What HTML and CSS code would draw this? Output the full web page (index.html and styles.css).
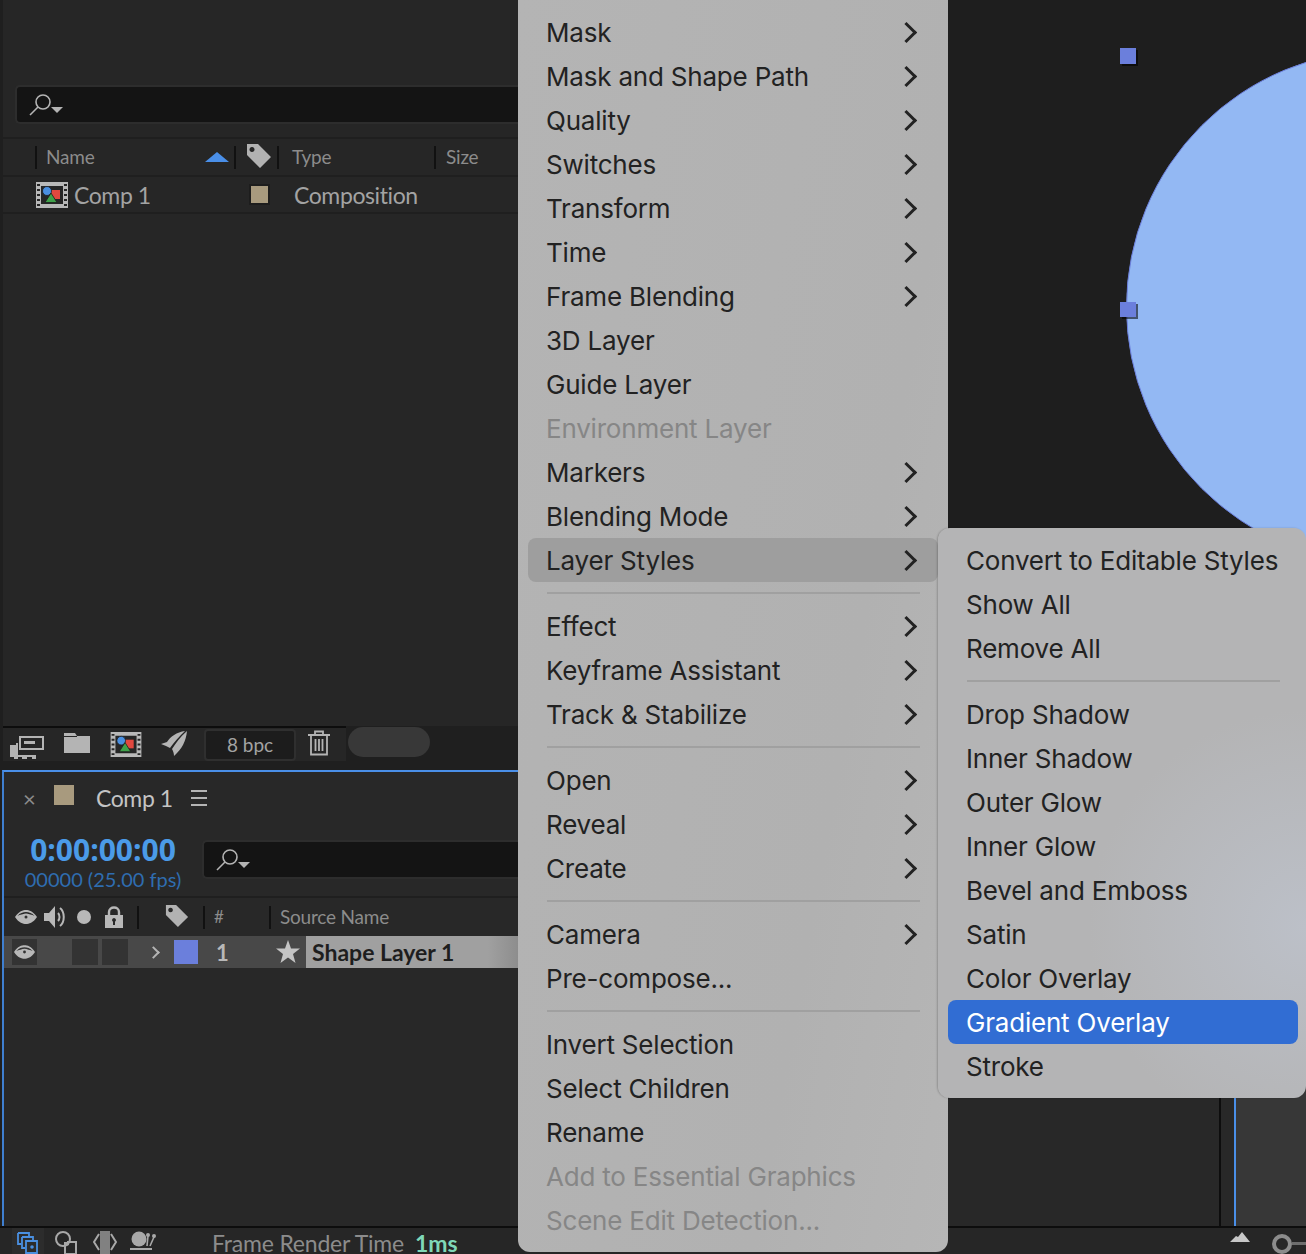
FILE: index.html
```html
<!DOCTYPE html>
<html lang="en">
<head>
  <meta charset="UTF-8" />
  <title>Comp 1 - Layer Styles</title>
  <link rel="stylesheet" href="styles.css">
</head>
<body>
  <svg class="defs" width="0" height="0">
    <symbol id="i-search" viewBox="0 0 34 24">
      <circle cx="14" cy="9" r="7" fill="none" stroke="#b4b4b4" stroke-width="1.6"/>
      <path d="M9 14 L1 22" stroke="#b4b4b4" stroke-width="1.6"/>
      <path d="M22 14 H34 L28 20 Z" fill="#b4b4b4"/>
    </symbol>
    <symbol id="i-tag" viewBox="0 0 26 26">
      <path fill-rule="evenodd" fill="#b2b2b2" d="M1 1 H12 L25 14 L14 25 L1 12 Z M6 4 a2.500 2.500 0 1 0 .01 0 Z"/>
    </symbol>
    <symbol id="i-eye" viewBox="0 0 22 14">
      <path fill-rule="evenodd" fill="#b8b8b8" d="M0 7 C4 1 8 0 11 0 C14 0 18 1 22 7 C18 13 14 14 11 14 C8 14 4 13 0 7 Z M11 2 C8 2 5 3 2.500 6 C5 4.500 8 4 11 4 C14 4 17 4.500 19.500 6 C17 3 14 2 11 2 Z"/>
      <circle cx="11" cy="7.500" r="4" fill="#b8b8b8"/>
      <circle cx="11" cy="7" r="1.500" fill="#333"/>
    </symbol>
    <symbol id="i-comp" viewBox="0 0 32 26">
      <path fill-rule="evenodd" fill="#b9b9b9" d="M0 0 H32 V26 H0 Z M5 4 V22 H27 V4 Z"/>
      <path fill="#262626" d="M1 2 h3 v2 h-3 z M1 7 h3 v2 h-3 z M1 12 h3 v2 h-3 z M1 17 h3 v2 h-3 z M1 22 h3 v2 h-3 z M28 2 h3 v2 h-3 z M28 7 h3 v2 h-3 z M28 12 h3 v2 h-3 z M28 17 h3 v2 h-3 z M28 22 h3 v2 h-3 z"/>
      <rect x="15" y="8" width="9" height="9" fill="#e2483f"/>
      <circle cx="11" cy="9" r="4.500" fill="#4a8fe0" stroke="#1d1d1d" stroke-width=".8"/>
      <path d="M15 11 L21 20.500 H9 Z" fill="#3fa14a" stroke="#1d1d1d" stroke-width=".8"/>
    </symbol>
  </svg>

  <div class="app">
    <div class="workspace">
      <div class="left">
        <section class="project">
          <div class="search project-search">
            <svg class="search-icon"><use href="#i-search"/></svg>
          </div>
          <div class="project-head">
            <i class="sep sep-name"></i>
            <span class="head-name">Name</span>
            <i class="sort-up"></i>
            <i class="sep sep-sort"></i>
            <svg class="tag"><use href="#i-tag"/></svg>
            <i class="sep sep-tag"></i>
            <span class="head-type">Type</span>
            <i class="sep sep-type"></i>
            <span class="head-size">Size</span>
          </div>
          <div class="asset">
            <svg class="asset-icon"><use href="#i-comp"/></svg>
            <span class="asset-name">Comp 1</span>
            <i class="asset-swatch"></i>
            <span class="asset-type">Composition</span>
          </div>
        </section>

        <div class="project-tools">
          <div class="tools-group">
            <svg class="tool-interpret" viewBox="0 0 34 24">
              <path fill="#b4b4b4" d="M0 10 h6 v-2 h2 V20 H26 v4 h-4 v-2 h-5 v2 h-5 v-2 h-4 v2 H4 v-2 H0 Z"/>
              <path fill-rule="evenodd" fill="#b4b4b4" d="M9 1 H34 V15 H9 Z M11 3 V13 H32 V3 Z"/>
              <rect x="14" y="6" width="11" height="3" fill="#b4b4b4"/>
            </svg>
            <svg class="tool-folder" viewBox="0 0 26 20">
              <path fill="#b4b4b4" d="M0 0 H11 L13 3 H26 V20 H0 Z"/>
              <path fill="#262626" d="M0 3 H13 V4 H0 Z"/>
            </svg>
            <svg class="tool-comp"><use href="#i-comp"/></svg>
            <svg class="tool-rocket" viewBox="0 0 26 26">
              <path fill="#b4b4b4" d="M26 0 C25 10 21 18 13 25 C13 22 12 20 11 18 C15 12 19 6 26 0 Z"/>
              <path fill="#b4b4b4" d="M24 0 C16 1 9 6 6 11 L0 13 L5 15 L9 17 C13 11 18 6 24 0 Z"/>
            </svg>
            <span class="bpc">8 bpc</span>
            <svg class="tool-trash" viewBox="0 0 22 26">
              <path fill="none" stroke="#b4b4b4" stroke-width="1.800" d="M0 5 H22 M7 5 V1.500 H15 V5 M3 5 V24.500 H19 V5 M7.500 9 V21 M11 9 V21 M14.500 9 V21"/>
            </svg>
          </div>
          <i class="tools-pill"></i>
        </div>

        <section class="timeline">
          <div class="tab">
            <span class="tab-close">×</span>
            <i class="tab-swatch"></i>
            <span class="tab-title">Comp 1</span>
            <span class="tab-menu"><i></i><i></i><i></i></span>
          </div>
          <div class="time-row">
            <div class="time">
              <div class="timecode">0:00:00:00</div>
              <div class="frames">00000 (25.00 fps)</div>
            </div>
            <div class="search timeline-search">
              <svg class="search-icon"><use href="#i-search"/></svg>
            </div>
          </div>
          <div class="layer-head">
            <svg class="head-eye"><use href="#i-eye"/></svg>
            <svg class="head-audio" viewBox="0 0 24 24">
              <path fill="#b8b8b8" d="M0 8 H5 L11 1 V23 L5 16 H0 Z"/>
              <path fill="none" stroke="#b8b8b8" stroke-width="2" d="M14 8 C16 10 16 14 14 16 M16 3 C21 7 21 17 16 21"/>
            </svg>
            <i class="head-solo"></i>
            <svg class="head-lock" viewBox="0 0 18 22">
              <path fill="none" stroke="#b8b8b8" stroke-width="2.400" d="M4 10 V6 C4 0 14 0 14 6 V10"/>
              <path fill-rule="evenodd" fill="#b8b8b8" d="M0 9 H18 V22 H0 Z M9 12 a2 2 0 0 0 -1 3.700 V19 H10 V15.700 A2 2 0 0 0 9 12 Z"/>
            </svg>
            <i class="sep sep-lock"></i>
            <svg class="head-tag"><use href="#i-tag"/></svg>
            <i class="sep sep-label"></i>
            <span class="head-num">#</span>
            <i class="sep sep-num"></i>
            <span class="head-source">Source Name</span>
          </div>
          <div class="layer">
            <span class="layer-eye"><svg><use href="#i-eye"/></svg></span>
            <i class="layer-cell cell-solo"></i>
            <i class="layer-cell cell-lock"></i>
            <i class="layer-twirl"></i>
            <i class="layer-swatch"></i>
            <span class="layer-num">1</span>
            <svg class="layer-star" viewBox="0 0 24 24">
              <path fill="#c4c4c4" d="M12 0 L15 8.500 H24 L17 14 L19.500 23 L12 17.500 L4.500 23 L7 14 L0 8.500 H9 Z"/>
            </svg>
            <span class="layer-name">Shape Layer 1</span>
          </div>
        </section>
      </div>

      <div class="right">
        <div class="stage">
          <div class="circle"></div>
          <i class="handle handle-top"></i>
          <i class="handle handle-mid"></i>
        </div>
        <div class="graph">
          <i class="graph-cti"></i>
          <div class="graph-track"></div>
        </div>
      </div>
    </div>

    <footer class="status">
      <span class="status-first">
        <svg viewBox="0 0 22 22">
          <path fill="none" stroke="#4a8fe0" stroke-width="1.800" d="M1 1 H12 V4 M1 1 V12 H4 M5 5 H16 V8 M5 5 V16 H8 M9 9 H20 V21 H9 Z"/>
          <circle cx="15" cy="15" r="1.800" fill="#4a8fe0"/>
        </svg>
      </span>
      <svg class="status-blend" viewBox="0 0 22 24">
        <circle cx="8" cy="8" r="7" fill="none" stroke="#a8a8a8" stroke-width="2"/>
        <path fill="none" stroke="#a8a8a8" stroke-width="2" d="M12 11 H21 V23 H10 V15"/>
        <path fill="#a8a8a8" d="M9 11 H14 V14 A7 7 0 0 1 9 15 Z"/>
      </svg>
      <svg class="status-braces" viewBox="0 0 24 24">
        <path fill="#a8a8a8" d="M7 0 H17 V24 H7 Z" opacity=".7"/>
        <path fill="none" stroke="#a8a8a8" stroke-width="2" d="M6 3 L1 11 L6 19 M18 3 L23 11 L18 19"/>
      </svg>
      <svg class="status-snail" viewBox="0 0 26 20">
        <circle cx="9" cy="8" r="7.500" fill="#a8a8a8"/>
        <path fill="#a8a8a8" d="M0 17 H22 V19 H0 Z"/>
        <path stroke="#a8a8a8" stroke-width="1.600" d="M17 15 L18 5 M20 15 L24 6"/>
        <circle cx="18" cy="4" r="2" fill="#a8a8a8"/>
        <circle cx="24" cy="5" r="2" fill="#a8a8a8"/>
      </svg>
      <span class="status-label">Frame Render Time</span>
      <span class="status-value">1ms</span>
      <svg class="status-mountain" viewBox="0 0 20 10">
        <path fill="#c8c8c8" d="M0 10 L6 4 L8 5 L12 0 L20 10 Z"/>
      </svg>
      <i class="status-zoom"></i>
      <i class="status-slider"></i>
    </footer>
  </div>

  <ul class="menu menu-main">
    <li class="has-sub">Mask</li>
    <li class="has-sub">Mask and Shape Path</li>
    <li class="has-sub">Quality</li>
    <li class="has-sub">Switches</li>
    <li class="has-sub">Transform</li>
    <li class="has-sub">Time</li>
    <li class="has-sub">Frame Blending</li>
    <li>3D Layer</li>
    <li>Guide Layer</li>
    <li class="off">Environment Layer</li>
    <li class="has-sub">Markers</li>
    <li class="has-sub">Blending Mode</li>
    <li class="has-sub open">Layer Styles</li>
    <li class="line"></li>
    <li class="has-sub">Effect</li>
    <li class="has-sub">Keyframe Assistant</li>
    <li class="has-sub">Track &amp; Stabilize</li>
    <li class="line"></li>
    <li class="has-sub">Open</li>
    <li class="has-sub">Reveal</li>
    <li class="has-sub">Create</li>
    <li class="line"></li>
    <li class="has-sub">Camera</li>
    <li>Pre-compose...</li>
    <li class="line"></li>
    <li>Invert Selection</li>
    <li>Select Children</li>
    <li>Rename</li>
    <li class="off">Add to Essential Graphics</li>
    <li class="off">Scene Edit Detection...</li>
  </ul>

  <ul class="menu menu-sub">
    <li>Convert to Editable Styles</li>
    <li>Show All</li>
    <li>Remove All</li>
    <li class="line"></li>
    <li>Drop Shadow</li>
    <li>Inner Shadow</li>
    <li>Outer Glow</li>
    <li>Inner Glow</li>
    <li>Bevel and Emboss</li>
    <li>Satin</li>
    <li>Color Overlay</li>
    <li class="active">Gradient Overlay</li>
    <li>Stroke</li>
  </ul>
</body>
</html>
```

FILE: styles.css
```css
* {
  margin: 0; padding: 0; box-sizing: border-box;
}

body {
  width: 1306px;
  height: 1254px;
  overflow: hidden;
  position: relative;
  background-color: #1c1c1c;
  font-family: Lato, sans-serif;
}

i { display: block; flex: none; }
svg { display: block; flex: none; }
.defs { position: absolute; }

.app {
  height: 1254px;
  display: flex;
  flex-direction: column;
}

.workspace {
  height: 1226px;
  display: flex;
}

.left {
  width: 520px;
  padding-left: 2px;
  display: flex;
  flex-direction: column;
  background-color: #1f1f1f;
}

/* project panel */
.project {
  height: 726px;
  margin-left: 1px;
  padding-top: 85px;
  background-color: #262626;
}

.search {
  height: 39px;
  display: flex;
  align-items: center;
  background-color: #141414;
  border: 2px solid #2d2d2d;
  border-right: none;
  border-radius: 5px 0 0 5px;
}

.project-search { margin-left: 12px; padding-left: 12px; }

.search-icon { width: 34px; height: 24px; }

.project-head {
  height: 40px;
  margin-top: 13px;
  padding-left: 1px;
  display: flex;
  align-items: center;
  border-top: 2px solid #1f1f1f;
  border-bottom: 2px solid #1f1f1f;
  font-size: 19px;
  letter-spacing: -0.2px;
  color: #8c8c8c;
}

.sep {
  width: 2px;
  height: 23px;
  background-color: #111;
}

.sep-name { margin-left: 31px; }
.head-name { margin: -2px 0 0 9px; width: 159px; }
.sort-up {
  width: 0;
  height: 0;
  border-left: 12px solid transparent;
  border-right: 12px solid transparent;
  border-bottom: 10px solid #4a8fe8;
}
.sep-sort { margin-left: 5px; }
.tag { width: 26px; height: 26px; margin-left: 10px; margin-top: -2px; }
.sep-tag { margin-left: 5px; }
.head-type { margin: -2px 0 0 13px; width: 142px; }
.head-size { margin: -2px 0 0 10px; }

.asset {
  height: 37px;
  padding-left: 33px;
  display: flex;
  align-items: center;
  border-bottom: 2px solid #1f1f1f;
  font-size: 23px;
  letter-spacing: -0.4px;
  color: #a3a3a3;
}

.asset-icon { width: 32px; height: 26px; }
.asset-name { margin-left: 6px; width: 175px; }
.asset-swatch {
  width: 21px;
  height: 21px;
  margin-right: 24px;
  background-color: #a89a7e;
  border: 2px solid #1d1d1d;
}

/* strip below the project panel */
.project-tools {
  height: 35px;
  margin-left: 1px;
  display: flex;
  background-color: #1f1f1f;
}

.tools-group {
  width: 343px;
  padding-left: 7px;
  display: flex;
  align-items: center;
  background-color: #262626;
  border-top: 2px solid #0d0d0d;
}

.tool-interpret { width: 34px; height: 24px; margin-top: 4px; }
.tool-folder { width: 26px; height: 20px; margin-left: 20px; margin-top: -3px; }
.tool-comp { width: 34px; height: 25px; margin-left: 19px; }
.tool-rocket { width: 26px; height: 26px; margin-left: 18px; margin-top: -2px; }

.bpc {
  width: 92px;
  height: 32px;
  margin-left: 17px;
  display: flex;
  align-items: center;
  justify-content: center;
  background-color: #1c1c1c;
  border: 2px solid #2f2f2f;
  border-radius: 4px;
  font-size: 19px;
  color: #a3a3a3;
}

.tool-trash { width: 22px; height: 26px; margin-left: 12px; margin-top: -3px; }

.tools-pill {
  width: 82px;
  height: 30px;
  margin: 1px 0 0 2px;
  background-color: #383838;
  border-radius: 15px;
}

/* timeline panel */
.timeline {
  flex: 1;
  margin-top: 9px;
  background-color: #282828;
  border-top: 2px solid #4a8fe8;
  border-left: 2px solid #3f7fd0;
}

.tab {
  height: 54px;
  padding-bottom: 2px;
  display: flex;
  align-items: center;
  font-size: 23px;
  letter-spacing: -0.4px;
  color: #c4c4c4;
}

.tab-close { margin-left: 19px; width: 13px; font-size: 22px; color: #8c8c8c; }
.tab-swatch {
  width: 20px;
  height: 20px;
  margin: -6px 0 0 18px;
  background-color: #a89a7e;
}
.tab-title { margin-left: 22px; width: 95px; }
.tab-menu { width: 16px; display: flex; flex-direction: column; gap: 5px; }
.tab-menu i { height: 2px; background-color: #b4b4b4; }

.time-row {
  height: 72px;
  display: flex;
  align-items: flex-start;
  border-bottom: 2px solid #1f1f1f;
}

.time { width: 198px; padding-top: 9px; text-align: center; }
.timecode { font-size: 30px; line-height: 30px; font-weight: 700; color: #4b9be8; font-family: 'Open Sans', sans-serif; }
.frames { font-size: 20px; line-height: 28px; color: #2f6db0; white-space: nowrap; }

.timeline-search { flex: 1; margin-top: 14px; padding-left: 12px; }

.layer-head {
  height: 38px;
  display: flex;
  align-items: center;
  font-size: 19px;
  letter-spacing: -0.2px;
  color: #8c8c8c;
}

.head-eye { width: 22px; height: 14px; margin-left: 11px; }
.head-audio { width: 24px; height: 24px; margin-left: 7px; }
.head-solo {
  width: 14px;
  height: 14px;
  margin-left: 9px;
  border-radius: 50%;
  background-color: #b8b8b8;
}
.head-lock { width: 18px; height: 22px; margin-left: 14px; }
.sep-lock { margin-left: 14px; }
.head-tag { width: 24px; height: 24px; margin-left: 26px; margin-top: -3px; }
.sep-label { margin-left: 14px; }
.head-num { margin: -2px 0 0 9px; width: 55px; font-size: 17px; }
.head-source { margin: -2px 0 0 9px; }

.layer {
  height: 32px;
  display: flex;
  align-items: center;
  background-color: #484848;
  margin-left: 0;
}

.layer-eye {
  width: 25px;
  height: 26px;
  margin-left: 8px;
  display: flex;
  align-items: center;
  justify-content: center;
  background-color: #333;
}
.layer-eye svg { width: 21px; height: 14px; }

.layer-cell { width: 26px; height: 26px; background-color: #333; }
.cell-solo { margin-left: 35px; }
.cell-lock { margin-left: 4px; }

.layer-twirl {
  width: 9px;
  height: 9px;
  margin-left: 21px;
  border-top: 2px solid #b4b4b4;
  border-right: 2px solid #b4b4b4;
  transform: rotate(45deg);
}

.layer-swatch { width: 24px; height: 24px; margin-left: 16px; background-color: #6b7fdc; }
.layer-num { margin-left: 18px; width: 60px; font-size: 22px; font-weight: 700; color: #b8b8b8; }
.layer-star { width: 24px; height: 24px; }

.layer-name {
  flex: 1;
  height: 32px;
  margin-left: 6px;
  padding-left: 6px;
  background: linear-gradient(to right, #a0a0a0 85%, #8c8c8c);
  font-size: 23px;
  line-height: 32px;
  font-weight: 700;
  color: #1e1e1e;
}

/* right side, mostly behind the menus */
.right { flex: 1; display: flex; flex-direction: column; }

.stage {
  height: 770px;
  position: relative;
  overflow: hidden;
  background-color: #1e1e1e;
}

.circle {
  position: absolute;
  left: 606px;
  top: 50px;
  width: 514px;
  height: 514px;
  border-radius: 50%;
  background-color: #93b8f3;
  border: 1px solid #6b7fdc;
}

.handle {
  position: absolute;
  left: 600px;
  width: 16px;
  height: 15px;
  background-color: #6b7fdc;
  box-shadow: 2px 2px 0 rgba(0, 0, 0, 0.55);
}
.handle-top { top: 48px; height: 16px; }
.handle-mid { top: 302px; }

.graph {
  flex: 1;
  display: flex;
  padding-left: 699px;
  background-color: #282828;
}

.graph-cti { width: 2px; background-color: #0d0d0d; }

.graph-track {
  flex: 1;
  margin-left: 13px;
  background-color: #373737;
  border-left: 2px solid #4a8fe8;
}

/* status bar */
.status {
  height: 28px;
  display: flex;
  align-items: center;
  background-color: #262626;
  border-top: 2px solid #0d0d0d;
  overflow: hidden;
}

.status-first {
  width: 32px;
  height: 26px;
  margin-left: 12px;
  padding: 4px 0 0 5px;
  background-color: #2c2c2c;
}
.status-first svg { width: 22px; height: 22px; }
.status-blend { width: 22px; height: 24px; margin: 3px 0 0 11px; }
.status-braces { width: 24px; height: 24px; margin: 3px 0 0 16px; }
.status-snail { width: 26px; height: 20px; margin: 0 0 0 13px; }
.status-label { margin: 4px 0 0 56px; width: 192px; font-size: 23px; line-height: 22px; letter-spacing: -0.2px; color: #8c8c8c; white-space: nowrap; }
.status-value { margin: 4px 0 0 11px; width: 42px; font-size: 23px; line-height: 22px; font-weight: 700; color: #7fd8b8; }
.status-mountain { width: 20px; height: 10px; margin: -8px 0 0 773px; }
.status-zoom {
  width: 20px;
  height: 20px;
  margin: 6px 0 0 22px;
  border: 4px solid #8c8c8c;
  border-radius: 50%;
}
.status-slider { flex: 1; height: 3px; margin-top: 4px; background-color: #6e6e6e; }

/* popup menus */
.menu {
  position: absolute;
  list-style: none;
  font-family: Inter, sans-serif;
  font-size: 26px;
  letter-spacing: -0.2px;
  color: #222;
}

.menu-main {
  left: 518px;
  top: 0;
  width: 430px;
  height: 1252px;
  padding: 10px 10px 9px;
  border-radius: 0 0 12px 12px;
  background: linear-gradient(100deg, #b4b4b4, #b1b1b1 70%, #b6b6b6);
}

.menu-sub {
  left: 938px;
  top: 528px;
  width: 368px;
  height: 570px;
  padding: 10px 8px 9px 10px;
  border-radius: 12px;
  background: radial-gradient(circle at 100% 70%, #bcc0c8, #b4b4b5 40%);
  box-shadow: -1px 0 2px rgba(0, 0, 0, 0.2);
}

.menu li {
  height: 44px;
  padding: 0 21px 0 18px;
  display: flex;
  align-items: center;
  justify-content: space-between;
  border-radius: 8px;
  white-space: nowrap;
}

.menu li.off { color: #868686; }
.menu li.open { background-color: #9e9e9e; }
.menu li.active { background-color: #316dd3; color: #fff; }

.has-sub::after {
  content: '';
  width: 12px;
  height: 12px;
  margin-right: 3px;
  border-top: 3px solid #222;
  border-right: 3px solid #222;
  transform: rotate(45deg);
}

.menu li.line {
  height: 22px;
  padding: 0;
  margin: 0 18px 0 19px;
  border-radius: 0;
  background: linear-gradient(#a0a0a0, #a0a0a0) center / 100% 2px no-repeat;
}
```
